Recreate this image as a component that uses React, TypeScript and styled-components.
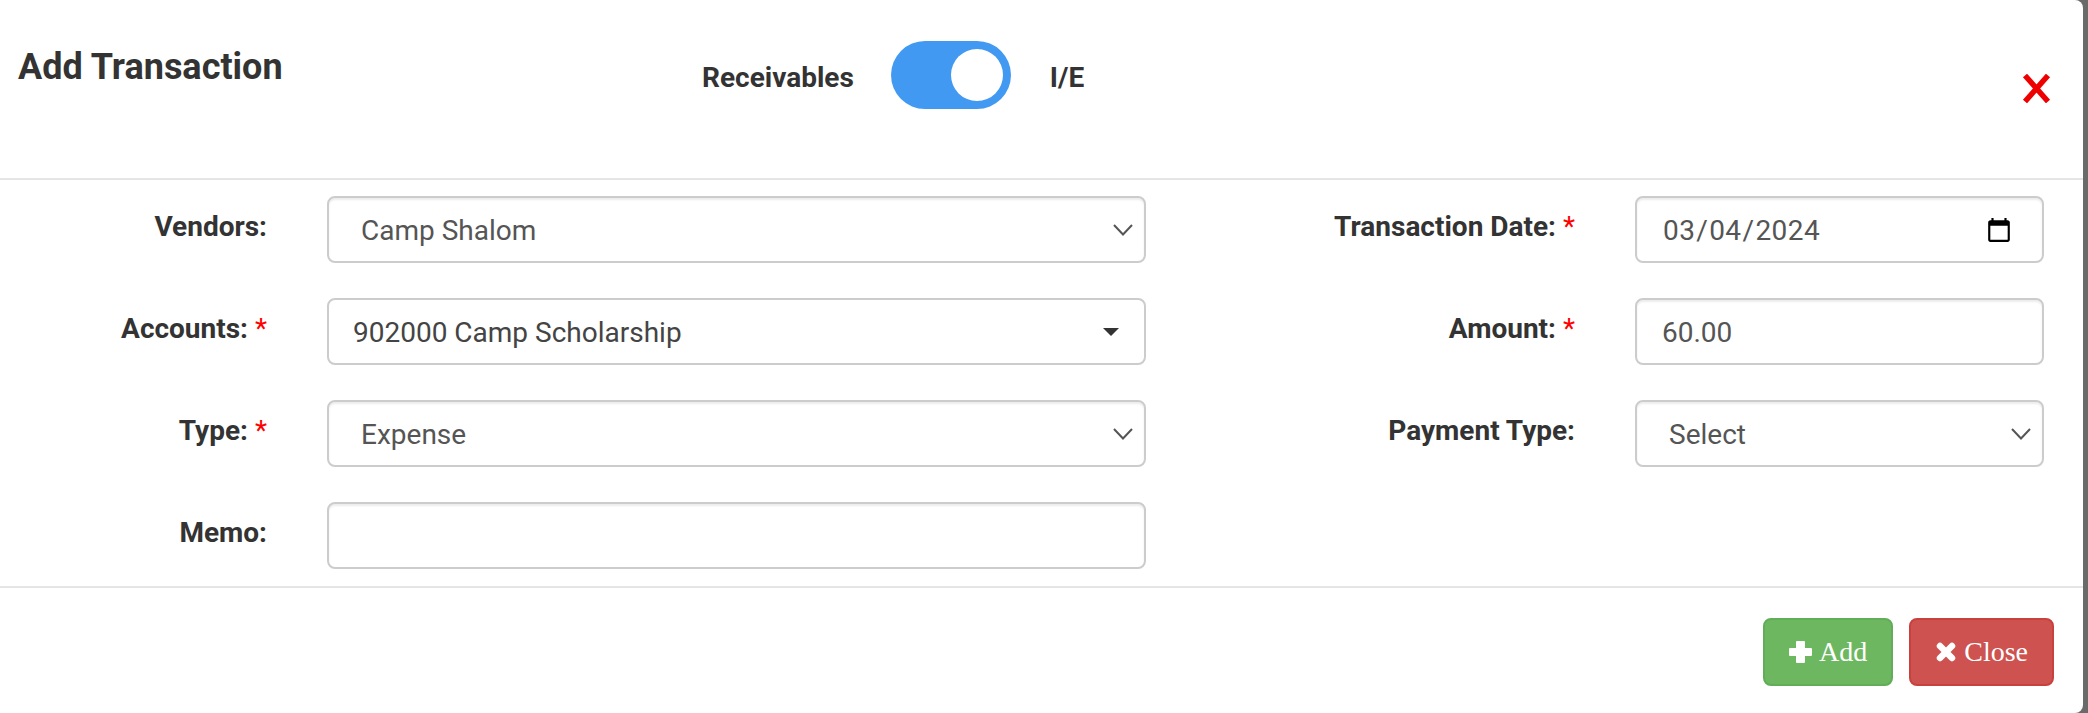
import React from 'react';
import styled, { createGlobalStyle } from 'styled-components';

const GlobalStyle = createGlobalStyle`
  html, body {
    margin: 0;
    padding: 0;
    height: 713px;
    overflow: hidden;
    background: #6a6a6a;
    font-family: Roboto, "Liberation Sans", sans-serif;
  }
`;

const Required = () => <Star>*</Star>;

const App: React.FC = () => {
  return (
    <>
      <GlobalStyle />
      <Modal>
        <Header>
          <Title>Add Transaction</Title>
          <ModeSwitch>
            <ModeLabel>Receivables</ModeLabel>
            <Toggle>
              <Knob />
            </Toggle>
            <ModeLabel>I/E</ModeLabel>
          </ModeSwitch>
          <CloseIcon viewBox="0 0 29 29">
            <path d="M3 1.5 L26 27.5 M26 1.5 L3 27.5" stroke="#ee0000" strokeWidth="5.5" fill="none" />
          </CloseIcon>
        </Header>

        <Form>
          <Label>Vendors:</Label>
          <SelectWrap>
            <Select defaultValue="Camp Shalom">
              <option>Camp Shalom</option>
            </Select>
            <Chevron />
          </SelectWrap>
          <Label>
            Transaction Date: <Required />
          </Label>
          <DateInput type="date" defaultValue="2024-03-04" />

          <Label>
            Accounts: <Required />
          </Label>
          <AccountBox>
            902000 Camp Scholarship
            <Caret />
          </AccountBox>
          <Label>
            Amount: <Required />
          </Label>
          <Input type="text" defaultValue="60.00" />

          <Label>
            Type: <Required />
          </Label>
          <SelectWrap>
            <Select defaultValue="Expense">
              <option>Expense</option>
            </Select>
            <Chevron />
          </SelectWrap>
          <Label>Payment Type:</Label>
          <SelectWrap>
            <Select defaultValue="Select">
              <option>Select</option>
            </Select>
            <Chevron />
          </SelectWrap>

          <Label>Memo:</Label>
          <Input type="text" defaultValue="" />
        </Form>

        <Footer>
          <Button $bg="#6eb761" $border="#61ad58" $gap={7} $left={24}>
            <ButtonIcon viewBox="0 0 23 22" $width={23}>
              <path
                d="M8 0 H15 Q16 0 16 1 V7 H22 Q23 7 23 8 V14 Q23 15 22 15 H16 V21 Q16 22 15 22 H8 Q7 22 7 21 V15 H1 Q0 15 0 14 V8 Q0 7 1 7 H7 V1 Q7 0 8 0 Z"
                fill="#fff"
              />
            </ButtonIcon>
            Add
          </Button>
          <Button $bg="#cd5250" $border="#c9413d" $gap={8} $left={25}>
            <ButtonIcon viewBox="0 0 20 20" $width={20}>
              <path d="M4 4 L16 16 M16 4 L4 16" stroke="#fff" strokeWidth="6.5" strokeLinecap="round" fill="none" />
            </ButtonIcon>
            Close
          </Button>
        </Footer>
      </Modal>
    </>
  );
};

export default App;

const Chevron = () => (
  <ChevronIcon viewBox="0 0 20 12">
    <path d="M1 1 L10 10.5 L19 1" stroke="#555" strokeWidth="2" fill="none" />
  </ChevronIcon>
);

const Modal = styled.div`
  width: 2083px;
  height: 713px;
  box-sizing: border-box;
  display: flex;
  flex-direction: column;
  background: #fff;
  border-radius: 0 8px 8px 0;
  color: #333;
`;

const Header = styled.div`
  height: 180px;
  box-sizing: border-box;
  flex-shrink: 0;
  display: flex;
  align-items: flex-start;
  border-bottom: 2px solid #e5e5e5;
`;

const Title = styled.div`
  width: 684px;
  box-sizing: border-box;
  padding: 47px 0 0 18px;
  font-size: 36px;
  font-weight: 700;
  line-height: 40px;
`;

const ModeSwitch = styled.div`
  display: flex;
  align-items: center;
  margin: 44px 0 0 18px;
`;

const ModeLabel = styled.div`
  font-size: 28px;
  font-weight: 700;
  line-height: 68px;
`;

const Toggle = styled.div`
  width: 120px;
  height: 68px;
  margin: -6px 39px 0 37px;
  box-sizing: border-box;
  padding: 8px;
  display: flex;
  justify-content: flex-end;
  border-radius: 34px;
  background: #4299f2;
`;

const Knob = styled.div`
  width: 52px;
  height: 52px;
  border-radius: 50%;
  background: #fff;
`;

const CloseIcon = styled.svg`
  width: 29px;
  height: 29px;
  margin: 74px 32px 0 auto;
`;

const Form = styled.div`
  flex: 1;
  box-sizing: border-box;
  padding-top: 16px;
  display: grid;
  grid-template-columns: 267px 819px 369px 409px;
  grid-auto-rows: 67px;
  column-gap: 60px;
  row-gap: 35px;
  border-bottom: 2px solid #e5e5e5;
`;

const Label = styled.label`
  padding-top: 12px;
  text-align: right;
  font-size: 28px;
  font-weight: 700;
  line-height: 38px;
  white-space: nowrap;
`;

const Star = styled.span`
  color: #f00;
  font-weight: 400;
`;

const Input = styled.input`
  width: 100%;
  height: 67px;
  box-sizing: border-box;
  padding: 2px 29px 0 25px;
  border: 2px solid #ccc;
  border-radius: 8px;
  box-shadow: inset 0 2px 2px rgba(0, 0, 0, 0.075);
  background: #fff;
  color: #555;
  font-family: Roboto, sans-serif;
  font-size: 28px;
  outline: none;

  &::-webkit-calendar-picker-indicator {
    width: 28px;
    height: 28px;
    padding: 0;
    margin: 0;
  }
`;

const DateInput = styled(Input)`
  letter-spacing: 0.4px;
`;

const SelectWrap = styled.div`
  position: relative;
  height: 67px;
`;

const Select = styled.select`
  width: 100%;
  height: 100%;
  box-sizing: border-box;
  padding: 2px 40px 0 32px;
  appearance: none;
  border: 2px solid #ccc;
  border-radius: 8px;
  box-shadow: inset 0 2px 2px rgba(0, 0, 0, 0.075);
  background: #fff;
  color: #555;
  font-family: Roboto, sans-serif;
  font-size: 28px;
  outline: none;
`;

const ChevronIcon = styled.svg`
  position: absolute;
  right: 13px;
  top: 28px;
  width: 20px;
  height: 12px;
  pointer-events: none;
`;

const AccountBox = styled.div`
  height: 67px;
  box-sizing: border-box;
  padding: 2px 25px 0 24px;
  display: flex;
  align-items: center;
  justify-content: space-between;
  border: 2px solid #ccc;
  border-radius: 8px;
  background: #fff;
  color: #444;
  font-size: 28px;
`;

const Caret = styled.span`
  width: 0;
  height: 0;
  margin-top: -2px;
  border-left: 8px solid transparent;
  border-right: 8px solid transparent;
  border-top: 8px solid #333;
`;

const Footer = styled.div`
  height: 125px;
  flex-shrink: 0;
  box-sizing: border-box;
  padding: 30px 29px 0 0;
  display: flex;
  justify-content: flex-end;
  align-items: flex-start;
  gap: 16px;
`;

const Button = styled.button<{ $bg: string; $border: string; $gap: number; $left: number }>`
  height: 68px;
  box-sizing: border-box;
  padding: 0 24px 0 ${({ $left }) => $left}px;
  display: flex;
  align-items: center;
  gap: ${({ $gap }) => $gap}px;
  border: 2px solid ${({ $border }) => $border};
  border-radius: 8px;
  background: ${({ $bg }) => $bg};
  color: #fff;
  font-family: "Liberation Serif", serif;
  font-size: 28px;
`;

const ButtonIcon = styled.svg<{ $width: number }>`
  width: ${({ $width }) => $width}px;
  height: 22px;
  flex-shrink: 0;
`;
